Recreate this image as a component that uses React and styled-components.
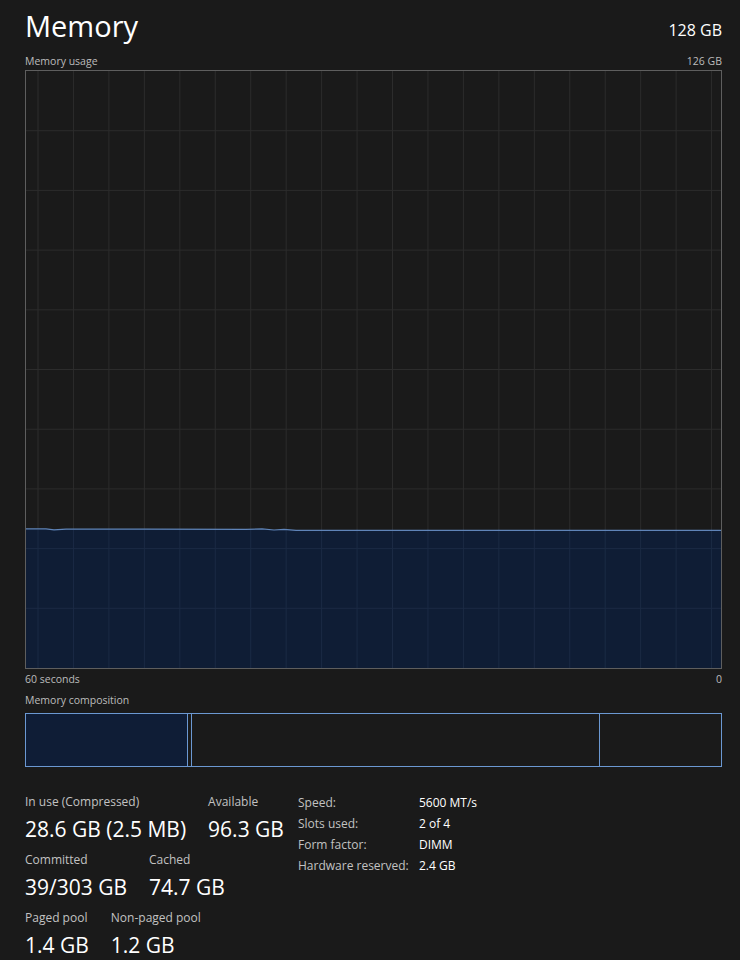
import React from "react";
import styled, { createGlobalStyle } from "styled-components";

const GlobalStyle = createGlobalStyle`
  html, body {
    margin: 0;
    padding: 0;
    background: #1a1a1a;
  }
  body {
    font-family: "Open Sans", "Noto Sans", "Liberation Sans", sans-serif;
    color: #fff;
  }
`;

const Page = styled.div`
  width: 740px;
  height: 960px;
  box-sizing: border-box;
  padding: 4px 18px 0 25px;
  background: #1a1a1a;
  overflow: hidden;
`;

const Header = styled.div`
  display: flex;
  justify-content: space-between;
  align-items: flex-end;
  height: 48px;
`;

const Title = styled.h1`
  margin: 0 0 6px;
  font-size: 29px;
  font-weight: 400;
  line-height: 40px;
  color: #fff;
`;

const Total = styled.div`
  font-size: 16px;
  line-height: 20px;
  margin-bottom: 12px;
  color: #fff;
`;

const CaptionRow = styled.div`
  display: flex;
  justify-content: space-between;
  font-size: 10.5px;
  line-height: 15px;
  color: #bcbcbc;
  height: ${(p) => p.$h || 17}px;
  align-items: center;
`;

const ChartBox = styled.div`
  width: 697px;
  height: 599px;
  box-sizing: border-box;
  border: 1px solid #5e5e5e;
  svg {
    display: block;
  }
`;

const CompBar = styled.div`
  display: flex;
  width: 697px;
  height: 54px;
  box-sizing: border-box;
  border: 1px solid #6b98d2;
  margin-top: 2px;
`;

const Segment = styled.div`
  box-sizing: border-box;
  width: ${(p) => p.$w}px;
  flex: ${(p) => (p.$grow ? 1 : "none")};
  background: ${(p) => (p.$filled ? "#0f1d36" : "transparent")};
  border-left: ${(p) => (p.$first ? "none" : "1px solid #6b98d2")};
`;

const Stats = styled.div`
  display: grid;
  grid-template-columns: 273px 1fr;
  align-items: start;
  margin-top: 25px;
`;

const StatColumn = styled.div`
  display: flex;
  flex-direction: column;
  gap: 4px;
`;

const StatRow = styled.div`
  display: flex;
  gap: ${(p) => p.$gap}px;
`;

const Stat = styled.div`
  display: flex;
  flex-direction: column;
`;

const StatLabel = styled.div`
  font-size: 12px;
  line-height: 20px;
  color: #c2c2c2;
`;

const StatValue = styled.div`
  font-size: 21px;
  line-height: 34px;
  color: #fff;
`;

const Specs = styled.div`
  display: grid;
  grid-template-columns: 121px 1fr;
  grid-auto-rows: 21px;
  align-items: center;
  font-size: 12px;
  line-height: 17px;
`;

const SpecKey = styled.div`
  color: #c2c2c2;
`;

const SpecValue = styled.div`
  color: #fff;
`;

const W = 695;
const H = 597;

const UsageChart = () => {
  const vLines = [];
  for (let x = 12; x < W; x += 35.45) vLines.push(x);
  const hLines = [];
  for (let y = 59.7; y < H - 1; y += 59.7) hLines.push(y);

  const top = 458.5;
  const pts = [
    [0, top - 0.6],
    [20, top - 0.6],
    [28, top + 0.3],
    [40, top - 0.4],
    [120, top - 0.4],
    [220, top - 0.2],
    [236, top - 0.6],
    [248, top + 0.5],
    [258, top - 0.2],
    [270, top + 0.8],
    [420, top + 0.8],
    [W, top + 0.8],
  ];
  const line = pts.map((p, i) => `${i ? "L" : "M"}${p[0]},${p[1]}`).join(" ");
  const area = `${line} L${W},${H} L0,${H} Z`;

  return (
    <ChartBox>
      <svg width={W} height={H} viewBox={`0 0 ${W} ${H}`}>
        {vLines.map((x) => (
          <line key={`v${x}`} x1={x} y1={0} x2={x} y2={H} stroke="#2c2c2c" strokeWidth="1" />
        ))}
        {hLines.map((y) => (
          <line key={`h${y}`} x1={0} y1={y} x2={W} y2={y} stroke="#2c2c2c" strokeWidth="1" />
        ))}
        <path d={area} fill="#0f1d36" fillOpacity="0.96" />
        {vLines.map((x) => (
          <line key={`fv${x}`} x1={x} y1={top} x2={x} y2={H} stroke="#1b2a44" strokeWidth="1" />
        ))}
        {hLines
          .filter((y) => y > top)
          .map((y) => (
            <line key={`fh${y}`} x1={0} y1={y} x2={W} y2={y} stroke="#1b2a44" strokeWidth="1" />
          ))}
        <path d={line} fill="none" stroke="#5f84b8" strokeWidth="1.2" />
      </svg>
    </ChartBox>
  );
};

const App = () => {
  return (
    <Page>
      <GlobalStyle />
      <Header>
        <Title>Memory</Title>
        <Total>128 GB</Total>
      </Header>
      <CaptionRow $h={18}>
        <span>Memory usage</span>
        <span>126 GB</span>
      </CaptionRow>
      <UsageChart />
      <CaptionRow $h={21}>
        <span>60 seconds</span>
        <span>0</span>
      </CaptionRow>
      <CaptionRow $h={21}>
        <span>Memory composition</span>
      </CaptionRow>
      <CompBar>
        <Segment $first $filled $w={161} />
        <Segment $w={4} />
        <Segment $grow />
        <Segment $w={122} />
      </CompBar>
      <Stats>
        <StatColumn>
          <StatRow $gap={22}>
            <Stat>
              <StatLabel>In use (Compressed)</StatLabel>
              <StatValue>28.6 GB (2.5 MB)</StatValue>
            </Stat>
            <Stat>
              <StatLabel>Available</StatLabel>
              <StatValue>96.3 GB</StatValue>
            </Stat>
          </StatRow>
          <StatRow $gap={22}>
            <Stat>
              <StatLabel>Committed</StatLabel>
              <StatValue>39/303 GB</StatValue>
            </Stat>
            <Stat>
              <StatLabel>Cached</StatLabel>
              <StatValue>74.7 GB</StatValue>
            </Stat>
          </StatRow>
          <StatRow $gap={22}>
            <Stat>
              <StatLabel>Paged pool</StatLabel>
              <StatValue>1.4 GB</StatValue>
            </Stat>
            <Stat>
              <StatLabel>Non-paged pool</StatLabel>
              <StatValue>1.2 GB</StatValue>
            </Stat>
          </StatRow>
        </StatColumn>
        <Specs>
          <SpecKey>Speed:</SpecKey>
          <SpecValue>5600 MT/s</SpecValue>
          <SpecKey>Slots used:</SpecKey>
          <SpecValue>2 of 4</SpecValue>
          <SpecKey>Form factor:</SpecKey>
          <SpecValue>DIMM</SpecValue>
          <SpecKey>Hardware reserved:</SpecKey>
          <SpecValue>2.4 GB</SpecValue>
        </Specs>
      </Stats>
    </Page>
  );
};

export default App;
